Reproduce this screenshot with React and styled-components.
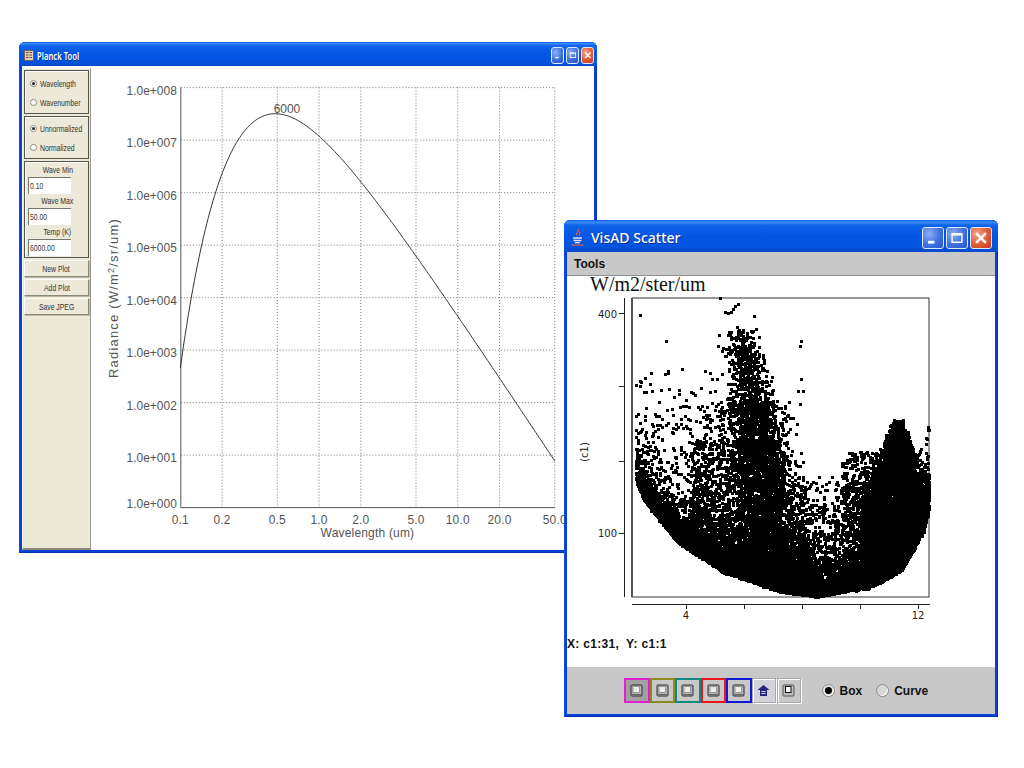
import React, { useMemo } from 'react'
import styled, { createGlobalStyle } from 'styled-components'

const GlobalStyle = createGlobalStyle`
  html, body {
    margin: 0;
    padding: 0;
    background: #fff;
    font-family: "Liberation Sans", Arial, sans-serif;
  }
  #root {
    position: relative;
    width: 1024px;
    height: 768px;
    overflow: hidden;
  }
`

const Window = styled.div`
  position: absolute;
  left: ${({ $x }) => $x}px;
  top: ${({ $y }) => $y}px;
  width: ${({ $w }) => $w}px;
  height: ${({ $h }) => $h}px;
  display: flex;
  flex-direction: column;
  box-sizing: border-box;
  padding: 0 ${({ $edge }) => $edge}px ${({ $edge }) => $edge}px;
  border-radius: 6px 6px 0 0;
  background: #0a3fd6;
  box-shadow: inset 1px 0 #0a50e6, inset -1px 0 #0831b0, inset 0 -1px #0831b0;
`

const TitleBar = styled.div`
  flex: none;
  height: ${({ $h }) => $h}px;
  box-sizing: border-box;
  margin: 0 -${({ $edge }) => $edge}px;
  padding: ${({ $top }) => $top}px ${({ $pad }) => $pad}px 0 ${({ $left }) => $left}px;
  display: flex;
  align-items: center;
  gap: ${({ $gap }) => $gap}px;
  border-radius: 6px 6px 0 0;
  background: linear-gradient(180deg, #0a5be8 0%, #3d8cf6 7%, #0f63ea 16%, #0456e2 50%, #0354e0 82%, #0a49c8 100%);
`

const TitleText = styled.span`
  flex: 1;
  color: #fff;
  font-family: "Noto Sans", "Liberation Sans", sans-serif;
  font-size: ${({ $size }) => $size}px;
  font-weight: ${({ $weight }) => $weight};
  text-shadow: 1px 1px #0a2f9c;
  white-space: nowrap;
`

// the old Windows dialog font is much narrower than anything installed
const Squeeze = styled.span`
  display: inline-block;
  transform: scaleX(${({ $x }) => $x || 0.72});
  transform-origin: ${({ $center }) => ($center ? 'center' : 'left')};
  white-space: nowrap;
`

const WinButtons = styled.div`
  display: flex;
  gap: ${({ $gap }) => $gap}px;
`

const WinButton = styled.div`
  width: ${({ $w }) => $w}px;
  height: ${({ $h }) => $h}px;
  box-sizing: border-box;
  border: 1px solid #dfe8fb;
  border-radius: 3px;
  display: flex;
  align-items: center;
  justify-content: center;
  background: ${({ $close }) => $close
    ? 'radial-gradient(circle at 30% 30%, #f0a48a 0%, #e2603a 50%, #c5381a 100%)'
    : 'radial-gradient(circle at 30% 30%, #8cb0f4 0%, #3e71e0 55%, #2a52c8 100%)'};
`

const WinGlyph = styled.svg`
  display: block;
  width: 70%;
  height: 70%;
`

const PlanckBody = styled.div`
  flex: 1;
  min-height: 0;
  display: flex;
  background: #fff;
`

const SidePanel = styled.div`
  flex: none;
  width: 69px;
  box-sizing: border-box;
  padding: 1px;
  display: flex;
  flex-direction: column;
  gap: 2px;
  background: #ece9d8;
  border: 1px solid #9c9a8c;
  border-top-color: #f6f5ee;
  border-left-color: #f6f5ee;
  border-bottom: 2px solid #8a8878;
  margin-top: 2px;
`

const Group = styled.div`
  flex: none;
  border: 1px solid #55544a;
  box-shadow: inset 1px 1px #fff;
  box-sizing: border-box;
  height: ${({ $h }) => $h}px;
  padding: ${({ $pad }) => $pad}px 1px 0 3px;
  display: flex;
  flex-direction: column;
`

const RadioRow = styled.label`
  height: 19px;
  display: flex;
  align-items: center;
  gap: 3px;
  padding-left: 2px;
  color: #333;
  font-size: 9.5px;
`

const SmallRadio = styled.span`
  flex: none;
  width: 7px;
  height: 7px;
  border-radius: 50%;
  box-sizing: border-box;
  background: #fff;
  border: 1px solid #8d8d85;
  display: flex;
  align-items: center;
  justify-content: center;
  &::after {
    content: '';
    width: 3px;
    height: 3px;
    border-radius: 50%;
    background: ${({ $on }) => ($on ? '#222' : 'transparent')};
  }
`

const FieldLabel = styled.div`
  height: 14px;
  line-height: 14px;
  text-align: center;
  color: #333;
  font-size: 9.5px;
`

const FieldInput = styled.div`
  width: 43px;
  height: 17px;
  box-sizing: border-box;
  padding-left: 1px;
  line-height: 16px;
  background: #fff;
  border-top: 1px solid #77766c;
  border-left: 1px solid #77766c;
  color: #333;
  font-size: 9.5px;
`

const PanelButton = styled.div`
  flex: none;
  height: 17px;
  box-sizing: border-box;
  line-height: 15px;
  text-align: center;
  background: #ece9d8;
  border: 1px solid #fff;
  border-right-color: #8a8878;
  border-bottom-color: #8a8878;
  box-shadow: 1px 1px #bdbaa8;
  color: #333;
  font-size: 9.5px;
`

const ChartSvg = styled.svg`
  flex: 1;
  min-width: 0;
  display: block;
  overflow: hidden;
`

const ChartText = styled.text`
  fill: #555;
  font-family: "Liberation Sans", sans-serif;
  font-size: ${({ $size }) => $size || 12}px;
  letter-spacing: ${({ $spacing }) => $spacing || 0}px;
`

const MenuBar = styled.div`
  flex: none;
  height: 24px;
  box-sizing: border-box;
  padding-left: 7px;
  display: flex;
  align-items: center;
  background: #c8c8c8;
  border-bottom: 1px solid #8e8e8e;
  color: #111;
  font-size: 12px;
  font-weight: 700;
`

const ScatterBody = styled.div`
  flex: 1;
  min-height: 0;
  display: flex;
  flex-direction: column;
  background: #fff;
`

const UnitLabel = styled.div`
  height: 20px;
  line-height: 17px;
  padding-left: 23px;
  color: #111;
  font-family: "Liberation Serif", serif;
  font-size: 20px;
`

const ScatterSvg = styled.svg`
  flex: none;
  display: block;
`

const ScatterText = styled.text`
  fill: #222;
  font-family: "DejaVu Sans", sans-serif;
  font-size: 10px;
`

const Readout = styled.div`
  height: 35px;
  padding-top: 6px;
  box-sizing: border-box;
  color: #111;
  font-size: 12px;
  font-weight: 700;
  letter-spacing: 0.3px;
  white-space: pre;
`

const Footer = styled.div`
  flex: none;
  height: 47px;
  box-sizing: border-box;
  padding: 11px 0 0 57px;
  display: flex;
  align-items: flex-start;
  background: #c8c8c8;
`

const ToolButton = styled.div`
  flex: none;
  width: ${({ $plain }) => ($plain ? 24 : 25.5)}px;
  height: 25px;
  margin-right: ${({ $plain }) => ($plain ? 1 : 0)}px;
  box-sizing: border-box;
  display: flex;
  align-items: center;
  justify-content: center;
  background: ${({ $active, $tint }) => ($active ? '#a0a0a0' : $tint ? '#d2d2da' : '#c8c8c8')};
  border: ${({ $color }) => ($color ? `2px solid ${$color}` : '1px solid #a9a9a9')};
  box-shadow: ${({ $color }) => ($color ? 'none' : 'inset 1px 1px #fff, 1px 1px #fff')};
`

const ToolIcon = styled.svg`
  display: block;
  width: 13px;
  height: 13px;
`

const RadioGroup = styled.div`
  margin-left: 20px;
  height: 25px;
  display: flex;
  align-items: center;
  gap: 14px;
`

const BigRadioLabel = styled.label`
  display: flex;
  align-items: center;
  gap: 5px;
  color: #111;
  font-size: 12px;
  font-weight: 700;
`

const BigRadio = styled.span`
  width: 13px;
  height: 13px;
  box-sizing: border-box;
  border-radius: 50%;
  border: 1px solid #8a8a8a;
  background: ${({ $on }) => ($on ? '#e4e4e4' : '#d8d8d8')};
  box-shadow: inset -1px -1px #fff;
  display: flex;
  align-items: center;
  justify-content: center;
  &::after {
    content: '';
    width: 7px;
    height: 7px;
    border-radius: 50%;
    background: ${({ $on }) => ($on ? '#000' : 'transparent')};
  }
`

// chart scales, in page pixels
const logX = um => 180.5 + (Math.log10(um) + 1) * 139
const logY = v => 508 - Math.log10(v) * 52.6

const planck = (um, t) => 1.191e8 / um ** 5 / (Math.exp(14388 / (um * t)) - 1)

const planckPath = () => {
  const pts = []
  for (let i = 0; i <= 240; i += 1) {
    const um = 0.1 * 500 ** (i / 240)
    pts.push(`${logX(um).toFixed(1)} ${logY(planck(um, 6000)).toFixed(1)}`)
  }
  return `M${pts.join('L')}`
}

const decades = ['1.0e+008', '1.0e+007', '1.0e+006', '1.0e+005', '1.0e+004', '1.0e+003', '1.0e+002', '1.0e+001', '1.0e+000']
const waveTicks = [
  [0.1, '0.1'], [0.2, '0.2'], [0.5, '0.5'], [1, '1.0'], [2, '2.0'],
  [5, '5.0'], [10, '10.0'], [20, '20.0'], [50, '50.0'],
]

// lower edge of the scatter cloud, page pixels
const edge = [[630, 470], [643, 500], [677, 543], [723, 573], [780, 592], [817, 597], [867, 587], [900, 570], [923, 530], [930, 500]]
const edgeY = x => {
  for (let i = 1; i < edge.length; i += 1) {
    if (x <= edge[i][0]) {
      const [x0, y0] = edge[i - 1]
      const [x1, y1] = edge[i]
      return y0 + ((y1 - y0) * (x - x0)) / (x1 - x0)
    }
  }
  return 500
}

const scatterPath = () => {
  let seed = 20240611
  const rnd = () => {
    seed = (seed * 1664525 + 1013904223) % 4294967296
    return seed / 4294967296
  }
  const gauss = () => (rnd() + rnd() + rnd() + rnd() - 2) * 0.87
  const out = []
  const put = (x, y) => {
    if (x < 632 || x > 929 || y < 300) return
    if (y > edgeY(x) + 1) return
    out.push(`M${Math.round(x)} ${Math.round(y)}h3v3h-3z`)
  }
  // band along the bowl
  for (let i = 0; i < 9000; i += 1) {
    const x = 635 + rnd() * 293
    const t = x < 690 ? 11 : x < 770 ? 20 : x < 865 ? 15 : 22
    const d = Math.min(-Math.log(rnd() + 0.001) * t, 85)
    put(x, edgeY(x) - 1 - d)
  }
  // tall column, narrow at the top and leaning right on the way down
  for (let i = 0; i < 2400; i += 1) {
    const y = 326 + 260 * rnd() ** 0.75
    const spread = 15 + (y - 326) * 0.1
    put(739 + gauss() * spread + (y - 326) * 0.16, y)
  }
  for (let i = 0; i < 1500; i += 1) {
    const y = 400 + rnd() * 190
    put(752 + gauss() * 32 + (y - 420) * 0.22, y)
  }
  // right cone, quickly wide below its tip, with a soft outline
  for (let i = 0; i < 5500; i += 1) {
    const h = rnd() ** 0.7
    const y = 420 + h * 170
    const w = Math.min(1, h * 2.2)
    const side = rnd() * 2 - 1
    put(897 + side * (side < 0 ? 4 + w * 30 : 3 + w * 27) + gauss() * (2 + w * 7), y + gauss() * 3)
  }
  for (let i = 0; i < 500; i += 1) {
    put(840 + rnd() * 50, 450 + rnd() * 100)
  }
  // sparse scatter
  for (let i = 0; i < 520; i += 1) {
    put(634 + rnd() * 95, 405 + 140 * rnd() ** 0.8)
  }
  for (let i = 0; i < 30; i += 1) {
    put(634 + rnd() * 80, 370 + rnd() * 60)
  }
  for (let i = 0; i < 420; i += 1) {
    put(790 + rnd() * 85, 475 + rnd() * 85)
  }
  for (let i = 0; i < 900; i += 1) {
    put(690 + rnd() * 90, 440 + rnd() * 110)
  }
  // the odd stray points
  const strays = [[639, 314], [719, 297], [724, 311], [727, 312], [730, 311], [732, 308], [734, 305], [737, 303], [753, 315], [665, 340], [667, 370], [681, 368], [645, 391], [660, 389], [668, 388], [645, 407], [704, 370], [700, 387], [709, 391], [800, 340], [799, 345], [800, 378], [797, 390], [802, 390], [799, 403], [895, 420]]
  strays.forEach(([x, y]) => out.push(`M${x} ${y}h3v3h-3z`))
  return out.join('')
}

const MinGlyph = () => (
  <WinGlyph viewBox="0 0 10 10"><rect x="1.5" y="7" width="4.5" height="2" fill="#fff" /></WinGlyph>
)
const MaxGlyph = () => (
  <WinGlyph viewBox="0 0 10 10"><path d="M1 1.5h8v7h-8z M2 3.2v4.3h6v-4.3z" fill="#fff" fillRule="evenodd" /></WinGlyph>
)
const CloseGlyph = () => (
  <WinGlyph viewBox="0 0 10 10"><path d="M1.5 1.5L8.5 8.5M8.5 1.5L1.5 8.5" stroke="#fff" strokeWidth="1.8" /></WinGlyph>
)

const Controls = ({ w, h, gap }) => (
  <WinButtons $gap={gap}>
    <WinButton $w={w} $h={h}><MinGlyph /></WinButton>
    <WinButton $w={w} $h={h}><MaxGlyph /></WinButton>
    <WinButton $w={w} $h={h} $close><CloseGlyph /></WinButton>
  </WinButtons>
)

const PlanckIcon = () => (
  <svg width="10" height="11" viewBox="0 0 10 11">
    <rect x="0.5" y="0.5" width="9" height="10" fill="#d8d0b8" stroke="#6a6458" />
    <path d="M2 2.5h2.5M5.5 2.5h2.5M2 5h2.5M5.5 5h2.5M2 7.5h2.5M5.5 7.5h2.5" stroke="#8a3a30" strokeWidth="1.2" />
  </svg>
)

const JavaIcon = () => (
  <svg width="15" height="20" viewBox="0 0 15 20">
    <path d="M8 1c2 2.500-3 3.500-1 6.500M10 3.500c1 1.500-1.500 2-.5 4" stroke="#e8604a" strokeWidth="1.2" fill="none" />
    <path d="M3 10h9M3.500 12.500h8M5 14.700h5" stroke="#f0dcd8" strokeWidth="1.3" />
    <path d="M1.500 17h12" stroke="#e0604a" strokeWidth="1.300" />
  </svg>
)

const SquareIcon = () => (
  <ToolIcon viewBox="0 0 13 13">
    <rect x="1" y="1" width="11" height="11" rx="1" fill="#b4b4b4" stroke="#2e2e2e" />
    <path d="M3 2.500h6.500v6h-6.500z" fill="#ececec" stroke="#888" strokeWidth="0.8" />
    <path d="M2 10.500h9" stroke="#666" />
  </ToolIcon>
)

const HomeIcon = () => (
  <ToolIcon viewBox="0 0 13 13">
    <path d="M6.500 1L.5 6h2.500v6h7V6h2.500z" fill="#26267e" />
    <path d="M4.500 7.500h4M4.500 9.500h4" stroke="#d8d8f0" />
  </ToolIcon>
)

const FrameIcon = () => (
  <ToolIcon viewBox="0 0 13 13">
    <rect x="1" y="1" width="11" height="11" rx="1" fill="#bcbcbc" stroke="#555" />
    <rect x="3.500" y="2.500" width="5.500" height="6" fill="#fff" stroke="#111" />
  </ToolIcon>
)

const PlanckChart = () => {
  const curve = useMemo(planckPath, [])
  const right = logX(50)
  return (
    <ChartSvg viewBox="91 66 504 482" width="504" height="482">
      {decades.map((label, i) => {
        const y = logY(10 ** (8 - i))
        return (
          <g key={label}>
            {i < 8 && <line x1="181" x2={right} y1={y} y2={y} stroke="#777" strokeDasharray="1 2" />}
            <ChartText x="177" y={i < 8 ? y + 7 : y} textAnchor="end">{label}</ChartText>
          </g>
        )
      })}
      {waveTicks.map(([um, label]) => (
        <g key={label}>
          {um > 0.1 && <line x1={logX(um)} x2={logX(um)} y1="87" y2="508" stroke="#777" strokeDasharray="1 2" />}
          <ChartText x={logX(um)} y="524" textAnchor="middle" $spacing={0.2}>{label}</ChartText>
        </g>
      ))}
      <path d={`M181 87V508H${right}`} fill="none" stroke="#555" />
      <path d={curve} fill="none" stroke="#333" />
      <ChartText x="274" y="113">6000</ChartText>
      <ChartText x="368" y="537" textAnchor="middle" $spacing={0.2}>Wavelength (um)</ChartText>
      <ChartText transform="translate(118 298) rotate(-90)" textAnchor="middle" $size={13} $spacing={1.2}>
        Radiance (W/m<tspan dy="-4" fontSize="9">2</tspan><tspan dy="4">/sr/um)</tspan>
      </ChartText>
    </ChartSvg>
  )
}

const ScatterPlot = () => {
  const dots = useMemo(scatterPath, [])
  return (
    <ScatterSvg viewBox="567 296 427 335" width="427" height="335">
      <rect x="632" y="298" width="297" height="299" fill="none" stroke="#333" />
      <path d="M632 298V597" stroke="#555" strokeWidth="2" />
      <path d="M624.500 298V597" stroke="#222" />
      <path d="M619 313.500h6M619 386.500h6M619 461.500h6M619 533.500h6" stroke="#222" />
      <path d="M632 604.500H930M686.500 604v5M744.500 604v5M802.500 604v5M860.500 604v5M918.500 604v5" stroke="#222" fill="none" />
      <path d={dots} fill="#000" />
      <ScatterText x="617" y="318" textAnchor="end">400</ScatterText>
      <ScatterText x="617" y="537" textAnchor="end">100</ScatterText>
      <ScatterText x="686" y="619" textAnchor="middle">4</ScatterText>
      <ScatterText x="918" y="619" textAnchor="middle">12</ScatterText>
      <ScatterText transform="translate(588 452) rotate(-90)" textAnchor="middle">(c1)</ScatterText>
    </ScatterSvg>
  )
}

const bandColors = ['#e020d0', '#8a8a20', '#108a80', '#e81818', '#1018d8']

const App = () => (
  <>
    <GlobalStyle />
    <Window $x={19} $y={42} $w={578} $h={511} $edge={3}>
      <TitleBar $h={24} $top={3} $edge={3} $left={5} $pad={3} $gap={3}>
        <PlanckIcon />
        <TitleText $size={11} $weight={600}><Squeeze $x={0.7}>Planck Tool</Squeeze></TitleText>
        <Controls w={13} h={17} gap={2} />
      </TitleBar>
      <PlanckBody>
        <SidePanel>
          <Group $h={44} $pad={3}>
            <RadioRow><SmallRadio $on /><Squeeze>Wavelength</Squeeze></RadioRow>
            <RadioRow><SmallRadio /><Squeeze>Wavenumber</Squeeze></RadioRow>
          </Group>
          <Group $h={43} $pad={2}>
            <RadioRow><SmallRadio $on /><Squeeze>Unnormalized</Squeeze></RadioRow>
            <RadioRow><SmallRadio /><Squeeze>Normalized</Squeeze></RadioRow>
          </Group>
          <Group $h={97} $pad={1}>
            <FieldLabel><Squeeze $center>Wave Min</Squeeze></FieldLabel>
            <FieldInput><Squeeze>0.10</Squeeze></FieldInput>
            <FieldLabel><Squeeze $center>Wave Max</Squeeze></FieldLabel>
            <FieldInput><Squeeze>50.00</Squeeze></FieldInput>
            <FieldLabel><Squeeze $center>Temp (K)</Squeeze></FieldLabel>
            <FieldInput><Squeeze>6000.00</Squeeze></FieldInput>
          </Group>
          <PanelButton><Squeeze $center>New Plot</Squeeze></PanelButton>
          <PanelButton><Squeeze $center>Add Plot</Squeeze></PanelButton>
          <PanelButton><Squeeze $center>Save JPEG</Squeeze></PanelButton>
        </SidePanel>
        <PlanckChart />
      </PlanckBody>
    </Window>

    <Window $x={564} $y={220} $w={434} $h={497} $edge={3}>
      <TitleBar $h={32} $top={3} $edge={3} $left={6} $pad={6} $gap={6}>
        <JavaIcon />
        <TitleText $size={14} $weight={500}>VisAD Scatter</TitleText>
        <Controls w={22} h={22} gap={2} />
      </TitleBar>
      <MenuBar>Tools</MenuBar>
      <ScatterBody>
        <UnitLabel>W/m2/ster/um</UnitLabel>
        <ScatterPlot />
        <Readout>{'X: c1:31,  Y: c1:1'}</Readout>
      </ScatterBody>
      <Footer>
        {bandColors.map((color, i) => (
          <ToolButton key={color} $color={color} $active={i === 0}><SquareIcon /></ToolButton>
        ))}
        <ToolButton $plain $tint><HomeIcon /></ToolButton>
        <ToolButton $plain><FrameIcon /></ToolButton>
        <RadioGroup>
          <BigRadioLabel><BigRadio $on />Box</BigRadioLabel>
          <BigRadioLabel><BigRadio />Curve</BigRadioLabel>
        </RadioGroup>
      </Footer>
    </Window>
  </>
)

export default App
